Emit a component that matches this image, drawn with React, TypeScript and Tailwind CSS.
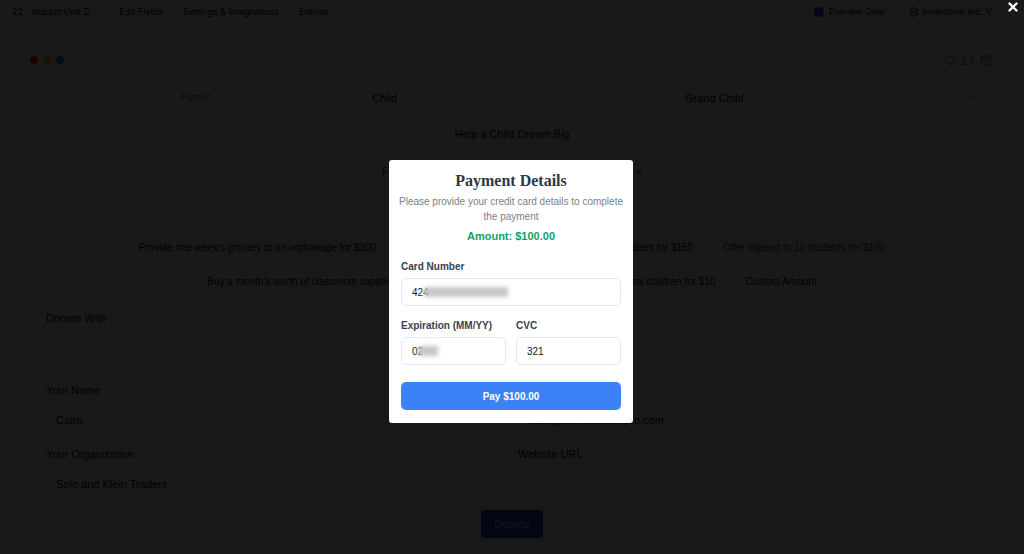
import { useState } from "react";
import type { ReactNode } from "react";
import { ChevronDown, Heart, Layers, MessageCircle, ShoppingBag, SquareCheck, X } from "lucide-react";

const navItems = ["Edit Fields", "Settings & Integrations", "Entries"];

const donationRows = [
  [
    { label: "Provide one week's grocery to an orphanage for $300", active: false },
    { label: "Provide one month of medical care for a hospital patient for $150", active: false },
    { label: "Offer stipend to 10 students for $100", active: true },
  ],
  [
    { label: "Buy a month's worth of classroom supplies for $50", active: false },
    { label: "Provide a warm, healthy lunch for several children for $10", active: false },
    { label: "Custom Amount", active: false },
  ],
];

function FormSelect({ label, muted }: { label: string; muted?: boolean }) {
  return (
    <div className="relative">
      <select
        aria-label={label}
        className={`block w-full appearance-none px-2 leading-5 ${
          muted ? "text-[10px] text-gray-500" : "text-[11px] text-black"
        }`}
      >
        <option>{label}</option>
      </select>
      <ChevronDown className="absolute right-0.5 top-1 w-2.5 h-2.5 text-gray-600 pointer-events-none" />
    </div>
  );
}

interface PageFieldProps {
  id: string;
  label: string;
  value: string;
  hideLabel?: boolean;
}

function PageField({ id, label, value, hideLabel }: PageFieldProps) {
  return (
    <div className="flex flex-col justify-end">
      {!hideLabel && (
        <label htmlFor={id} className="block text-[11px] leading-4">
          {label}
        </label>
      )}
      <input
        id={id}
        aria-label={label}
        defaultValue={value}
        className="mt-2 mb-3 block h-7 w-full px-2.5 text-[11px]"
      />
    </div>
  );
}

function DonationPage() {
  return (
    <div className="min-h-screen bg-white text-black">
      <header className="flex h-6 items-center justify-between px-3 text-[9px] font-[Inter,sans-serif]">
        <nav className="flex items-center gap-5">
          <a href="#form" className="mr-0.5">
            22 - Impact Unit D...
          </a>
          {navItems.map((item) => (
            <a key={item} href="#nav">
              {item}
            </a>
          ))}
        </nav>
        <div className="flex items-center gap-6 pr-5">
          <button className="flex items-center gap-1">
            <SquareCheck className="w-3 h-3 fill-blue-700 text-blue-400" />
            Preview Only
          </button>
          <button className="flex items-center gap-1">
            <Layers className="w-2.5 h-2.5" />
            Inventorm Inc. V
          </button>
        </div>
      </header>

      <div className="flex h-4 items-center justify-between mt-7 px-[30px]">
        <div className="flex gap-[5px]">
          <span className="w-2 h-2 rounded-full bg-red-500" />
          <span className="w-2 h-2 rounded-full bg-yellow-400" />
          <span className="w-2 h-2 rounded-full bg-teal-600" />
        </div>
        <div className="flex gap-1.5 pr-0.5 text-gray-600">
          <Heart className="w-3 h-3" />
          <MessageCircle className="w-3 h-3" />
          <ShoppingBag className="w-3 h-3" />
        </div>
      </div>

      <form className="px-[46px] pt-5">
        <div className="ml-[126px] grid grid-cols-[180px_1fr_1fr] gap-3">
          <FormSelect label="Parent" muted />
          <FormSelect label="Child" />
          <FormSelect label="Grand Child" />
        </div>
        <h1 className="mt-4 text-center text-[11px] leading-5">
          Help a Child <em>Dream</em> Big
        </h1>
        <div className="mt-3.5 flex justify-center">
          <label className="flex w-[284px] justify-between rounded px-3 py-1 text-[10px] leading-5 text-blue-900">
            <input type="radio" name="donation" className="sr-only" />
            <span>F</span>
            <span>e</span>
          </label>
        </div>
        <div className="mt-12 flex flex-col gap-1.5">
          {donationRows.map((row, i) => (
            <div key={i} className="flex justify-center gap-1.5">
              {row.map((option) => (
                <label
                  key={option.label}
                  className={`rounded px-3 py-1 text-[10px] leading-5 whitespace-nowrap ${
                    option.active ? "bg-sky-50 text-blue-900" : ""
                  }`}
                >
                  <input type="radio" name="donation" className="sr-only" />
                  {option.label}
                </label>
              ))}
            </div>
          ))}
        </div>
        <p className="mt-3.5 text-[11px] leading-4">Donate With</p>
        <div className="mt-14 grid grid-cols-2 gap-x-3">
          <PageField id="name" label="Your Name" value="Cairo" />
          <PageField id="email" label="Your Email" value="cairo@soloandkleinpro.com" hideLabel />
          <PageField id="organization" label="Your Organization" value="Solo and Klein Traders" />
          <PageField id="website" label="Website URL" value="" />
        </div>
        <div className="flex justify-center">
          <button type="button" className="h-7 rounded bg-blue-800 px-[13px] text-[11px] text-gray-300">
            Donate
          </button>
        </div>
      </form>
    </div>
  );
}

interface CardFieldProps {
  id: string;
  label: string;
  value: string;
  onChange: (value: string) => void;
  children?: ReactNode;
}

function CardField({ id, label, value, onChange, children }: CardFieldProps) {
  return (
    <div>
      <label htmlFor={id} className="block text-[10px] leading-4 font-bold text-[#374151]">
        {label}
      </label>
      <div className="relative mt-[3px]">
        <input
          id={id}
          value={value}
          onChange={(e) => onChange(e.target.value)}
          className="block h-7 w-full rounded-[5px] border border-gray-200 bg-white px-2.5 text-[10px] text-gray-900"
        />
        {children}
      </div>
    </div>
  );
}

function PaymentDialog() {
  const [card, setCard] = useState("424");
  const [expiry, setExpiry] = useState("02");
  const [cvc, setCvc] = useState("321");

  return (
    <div
      role="dialog"
      aria-labelledby="payment-title"
      className="w-[244px] rounded-[3px] bg-white px-3 pt-[11px] pb-[13px]"
    >
      <h2
        id="payment-title"
        className="text-center font-['Liberation_Serif',serif] text-[16px] leading-5 font-bold text-[#2d3748]"
      >
        Payment Details
      </h2>
      <p className="-mx-1 mt-[3px] text-center text-[10px] leading-[15px] text-[#7b7f86]">
        Please provide your credit card details to complete the payment
      </p>
      <p className="mt-1 text-center text-[11px] leading-4 font-bold text-[#0e9f6e]">Amount: $100.00</p>
      <form className="mt-[15px]">
        <CardField id="card" label="Card Number" value={card} onChange={setCard}>
          <span className="absolute top-[9px] left-[23px] h-2.5 w-[84px] bg-[#c6c6c6] blur-[2px]" />
        </CardField>
        <div className="mt-3 grid grid-cols-2 gap-2.5">
          <CardField id="expiry" label="Expiration (MM/YY)" value={expiry} onChange={setExpiry}>
            <span className="absolute top-[9px] left-[17px] h-2.5 w-5 bg-[#c6c6c6] blur-[2px]" />
          </CardField>
          <CardField id="cvc" label="CVC" value={cvc} onChange={setCvc} />
        </div>
        <button
          type="button"
          className="mt-[17px] block h-7 w-full rounded-[5px] bg-[#3b82f6] text-[10px] font-bold text-white"
        >
          Pay $100.00
        </button>
      </form>
    </div>
  );
}

export default function App() {
  return (
    <div className="relative min-h-screen overflow-hidden font-['Liberation_Sans',Arial,sans-serif]">
      <DonationPage />
      <div className="fixed inset-0 flex flex-col items-center bg-black/90 pt-40 pr-0.5">
        <button aria-label="Close" className="absolute top-0 right-1 text-white">
          <X className="w-3.5 h-3.5" strokeWidth={4} />
        </button>
        <PaymentDialog />
      </div>
    </div>
  );
}
